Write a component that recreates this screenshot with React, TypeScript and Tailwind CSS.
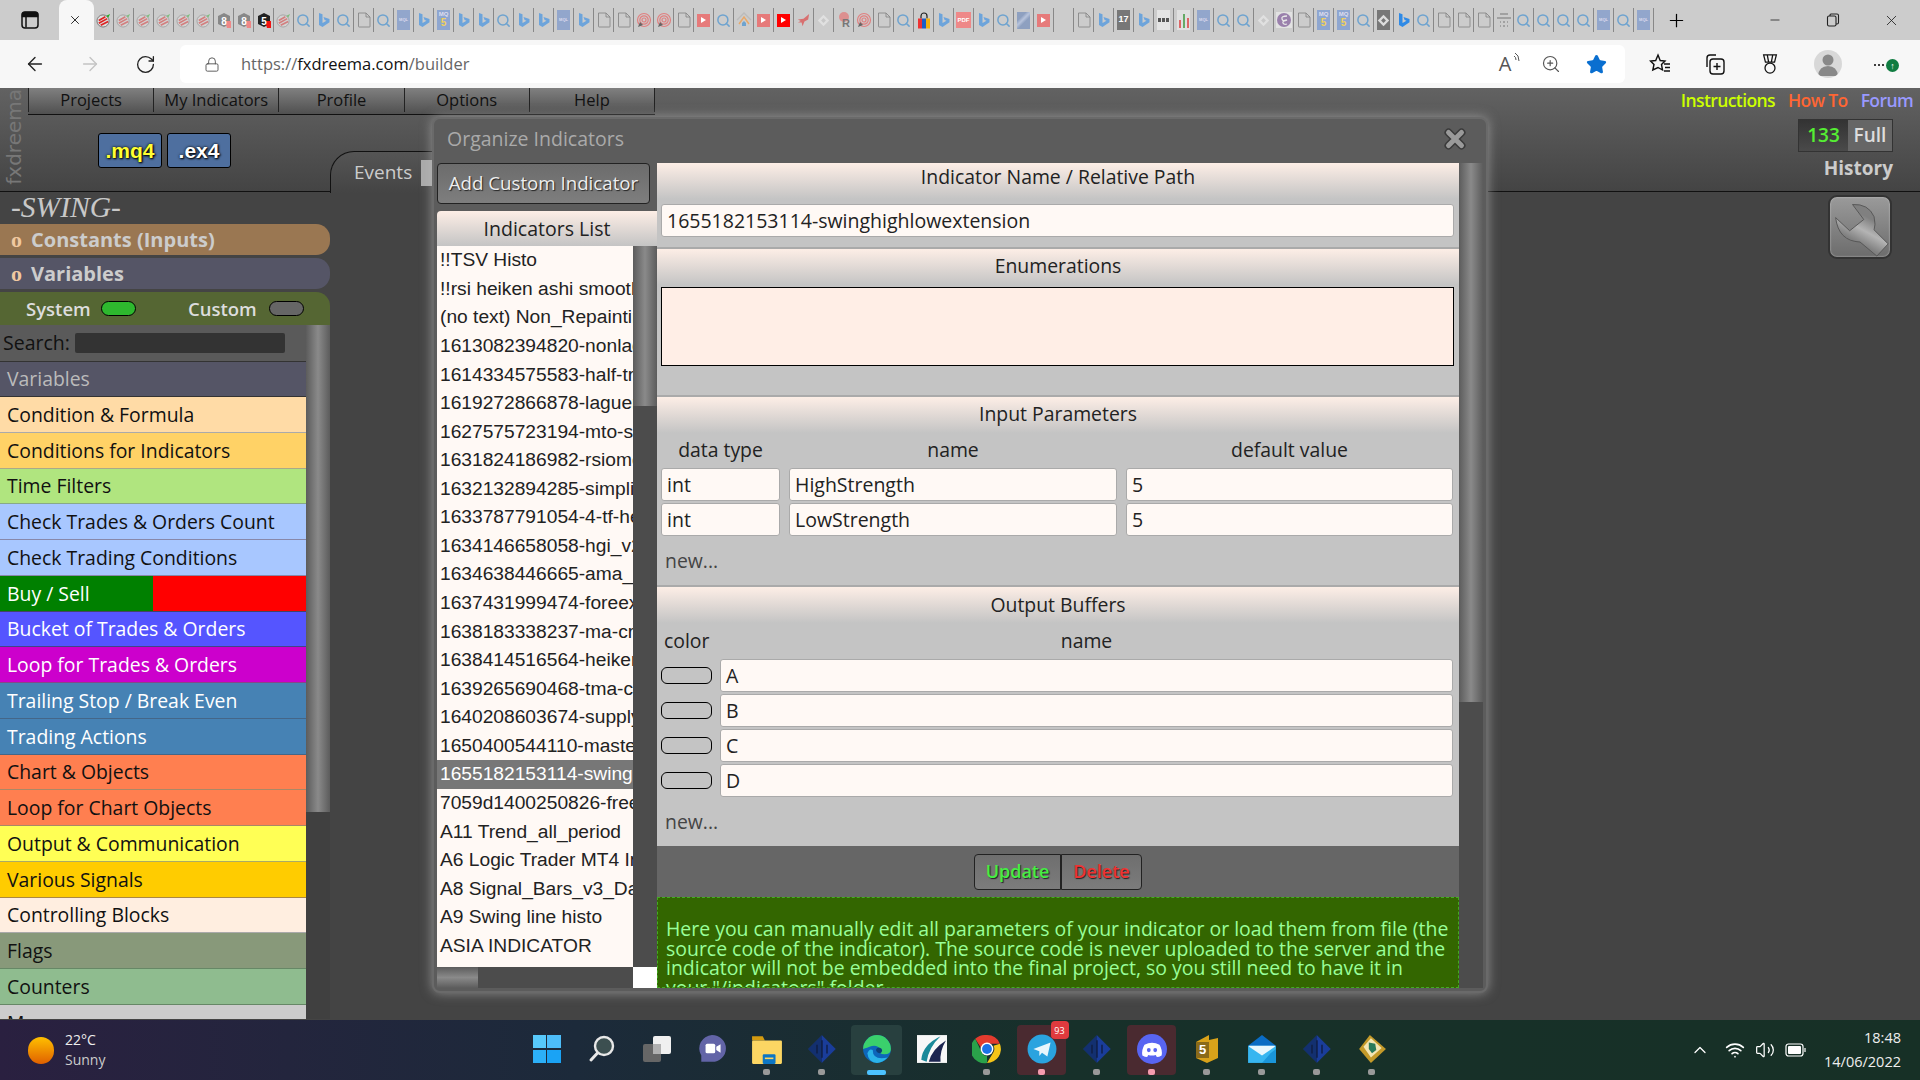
import type { ReactNode } from "react";
import { ArrowLeft, ArrowRight, ChevronUp, Lock, Minus, Plus, RotateCw, Search, Star, Volume2, Wifi, X, ZoomIn } from "lucide-react";

const tabIcons = [
  "fx", "fxp", "fxp", "fxp", "fxp", "fxp", "hex8", "hex8", "hex5", "fxp", "search", "bing", "search", "doc", "search", "mql", "bing", "mq5", "bing",
  "bing", "search", "bing", "bing", "mql", "bing", "doc", "doc", "finger", "finger", "doc", "play", "search", "house", "play", "yt", "bird", "gem", "r", "finger", "doc", "search", "bag", "bing",
  "pdf", "bing", "search", "img", "play", "", "doc", "bing", "tv", "bing", "dots", "chart", "mql", "search", "search", "gem", "emacs", "doc", "mq5", "mq5", "search", "gemd", "bings", "search",
  "doc", "doc", "doc", "lines", "search", "search", "search", "search", "mql", "search", "mql",
];

function TabIcon({ kind }: { kind: string }) {
  switch (kind) {
    case "fx":
    case "fxp":
      return (
        <svg viewBox="0 0 16 16" className={`h-[15px] w-[15px] ${kind === "fxp" ? "opacity-45" : ""}`}>
          <circle cx="7.5" cy="8.5" r="6.5" fill="#ddd" stroke="#777" />
          <path d="M3 11 12 6M3 8 10 4M5 13 13 9" stroke="#d22" strokeWidth="1.8" />
          <path d="M11 3 15 1 13 5z" fill="#2a2" />
        </svg>
      );
    case "hex8":
    case "hex5":
      return (
        <svg viewBox="0 0 16 16" className="h-[16px] w-[16px]">
          <path d="M8 1 14 4V12L8 15 2 12V4z" fill={kind === "hex5" ? "#222" : "#888"} />
          <path d="M9 9H15V16H11z" fill={kind === "hex5" ? "#e11" : "#e88"} />
          <text x="8" y="12.5" textAnchor="middle" fontSize="10" fontWeight="700" fill="#fff" fontFamily="Liberation Sans">{kind === "hex5" ? "5" : "8"}</text>
        </svg>
      );
    case "search":
      return <Search className="h-[15px] w-[15px] text-[#6ea3cf]" strokeWidth={2.4} />;
    case "bing":
    case "bings":
      return (
        <svg viewBox="0 0 16 16" className={`h-[16px] w-[16px] ${kind === "bing" ? "opacity-60" : ""}`}>
          <path d="M3 1 6.5 2.2V11L10.5 8.8 8.6 7.9 7.5 5 13.5 7V10.2L6.5 15 3 13z" fill="#2f8ae6" />
        </svg>
      );
    case "doc":
      return (
        <svg viewBox="0 0 16 16" className="h-[16px] w-[16px]" fill="none" stroke="#888" strokeWidth="0.9">
          <path d="M2.5 1H10L14 5V14.5Q14 15 13.5 15H3Q2.5 15 2.5 14.5zM10 1V5H14" />
        </svg>
      );
    case "mql":
      return (
        <div className="flex h-[20px] w-[13px] items-center justify-center bg-[#92a6cc] font-['Liberation_Sans'] text-[4px] font-bold text-[#dde]">MQL</div>
      );
    case "mq5":
      return (
        <div className="flex h-[20px] w-[13px] flex-col items-center bg-[#8ea6d0] font-['Liberation_Sans'] text-[6px] font-bold leading-[8px] text-[#dde]">
          MQ<span className="text-[10px] leading-[10px] text-[#f0d060]">5</span>
        </div>
      );
    case "finger":
      return (
        <svg viewBox="0 0 16 16" className="h-[16px] w-[16px]" fill="none" stroke="#e08080" strokeWidth="1.2">
          <circle cx="8" cy="8" r="6.5" />
          <circle cx="8" cy="8" r="4.2" />
          <circle cx="8" cy="8" r="2" />
          <path d="M2 15 4 10 7 13z" fill="#666" stroke="none" />
        </svg>
      );
    case "play":
    case "yt":
      return (
        <div className={`flex h-[13px] w-[13px] items-center justify-center ${kind === "yt" ? "bg-[#f00]" : "bg-[#e67a7a]"}`}>
          <div className="h-0 w-0 border-y-[3px] border-l-[5px] border-y-transparent border-l-white" />
        </div>
      );
    case "house":
      return (
        <svg viewBox="0 0 16 16" className="h-[16px] w-[16px]" fill="none" strokeWidth="1.4">
          <path d="M1 8 8 1 15 8" stroke="#bbb" />
          <path d="M3 12 8 5 13 12" stroke="#e8a868" />
          <path d="M6 14V11L8 9 10 11V14z" fill="#6ea3cf" />
        </svg>
      );
    case "bird":
      return (
        <svg viewBox="0 0 16 16" className="h-[15px] w-[15px]">
          <path d="M2 7 8 6 14 1 13 7 9 9 7 14 6 10 2 10 5 8.5z" fill="#d87070" />
        </svg>
      );
    case "gem":
    case "gemd":
      return (
        <div className={`flex h-[20px] w-[13px] items-center justify-center ${kind === "gemd" ? "bg-[#777]" : ""}`}>
          <svg viewBox="0 0 16 16" className="h-[13px] w-[13px]">
            <path d="M8 1 15 8 8 15 1 8z" fill={kind === "gemd" ? "#ddd" : "#e0e0e0"} />
            <path d="M5 8 8 5 11 8 8 11z" fill={kind === "gemd" ? "#777" : "#c8c8c8"} />
          </svg>
        </div>
      );
    case "r":
      return (
        <svg viewBox="0 0 16 16" className="h-[16px] w-[16px]">
          <circle cx="8" cy="5" r="5" fill="#dc9090" />
          <text x="10" y="15" textAnchor="middle" fontSize="11" fontWeight="700" fill="#777" fontFamily="Liberation Sans">R</text>
        </svg>
      );
    case "bag":
      return (
        <svg viewBox="0 0 16 16" className="h-[19px] w-[16px]">
          <path d="M5 6V3.5A3 3 0 0 1 11 3.5V6" fill="none" stroke="#222" strokeWidth="1.2" />
          <rect x="2" y="6" width="4" height="10" fill="#e33" />
          <rect x="6" y="6" width="4" height="10" fill="#1a5fc8" />
          <rect x="10" y="6" width="4" height="10" fill="#f2b010" />
        </svg>
      );
    case "pdf":
      return (
        <div className="flex h-[16px] w-[15px] items-center justify-center bg-[#e88] font-['Liberation_Sans'] text-[6px] font-bold text-white">PDF</div>
      );
    case "img":
      return <div className="h-[17px] w-[13px] bg-[linear-gradient(135deg,#8ea0c0_30%,#b8c4dc_45%,#8ea0c0_60%)]" />;
    case "tv":
      return <div className="flex h-[20px] w-[13px] items-center justify-center bg-[#777] font-['Liberation_Sans'] text-[9px] font-bold text-white">17</div>;
    case "dots":
      return (
        <div className="flex h-[20px] w-[13px] items-center justify-center gap-px bg-[#e4e4e4]">
          <div className="h-[4px] w-[3px] bg-[#555]" />
          <div className="h-[4px] w-[3px] bg-[#555]" />
          <div className="h-[4px] w-[3px] bg-[#555]" />
        </div>
      );
    case "chart":
      return (
        <div className="flex h-[20px] w-[13px] items-end justify-center gap-[2px] bg-[#e0e0e0] pb-[2px]">
          <div className="h-[8px] w-[2px] bg-[#d66]" />
          <div className="h-[14px] w-[2px] bg-[#6a6]" />
          <div className="h-[10px] w-[2px] bg-[#d66]" />
        </div>
      );
    case "emacs":
      return (
        <svg viewBox="0 0 16 16" className="h-[18px] w-[16px]">
          <rect width="16" height="16" fill="#e2e2e2" />
          <circle cx="8" cy="8" r="7" fill="#9a80ac" />
          <path d="M11 4Q5 4 6 7T11 8Q6 9 7 11T11 12" fill="none" stroke="#e8e8e8" strokeWidth="1.3" />
        </svg>
      );
    case "lines":
      return (
        <svg viewBox="0 0 16 16" className="h-[16px] w-[16px]" stroke="#777" strokeWidth="1">
          <path d="M4 2H12M1 6H15M4 10H5M7 10H9M11 10H12M4 14H5M7 14H9M11 14H12" />
        </svg>
      );
    default:
      return null;
  }
}

function TabStrip() {
  return (
    <div className="flex h-[40px] shrink-0 items-stretch bg-[#cccccc]">
      <div className="flex w-[59px] items-center justify-center">
        <svg viewBox="0 0 18 18" className="h-[18px] w-[18px]" fill="none" stroke="#111" strokeWidth="1.5">
          <rect x="1" y="1" width="16" height="16" rx="3" />
          <path d="M1.5 3.5Q1.5 1.5 4 1.5H14Q16.5 1.5 16.5 3.5V5.5H1.5z" fill="#111" />
          <path d="M5 5.5V16.5" />
        </svg>
      </div>
      <div className="flex w-[35px] items-center justify-center rounded-t-[8px] bg-[#f7f7f7] pr-[4px]">
        <X className="h-[14px] w-[14px] text-black" strokeWidth={1.4} />
      </div>
      {tabIcons.map((kind, i) => (
        <div key={i} className="flex h-[40px] w-[20px] items-center">
          <div className="flex h-[24px] w-[19px] items-center justify-center overflow-hidden"><TabIcon kind={kind} /></div>
          <div className="h-[24px] w-px bg-[#888]" />
        </div>
      ))}
      <div className="flex w-[44px] items-center justify-center">
        <Plus className="h-[21px] w-[21px] text-black" strokeWidth={1.4} />
      </div>
      <div className="ml-auto flex items-center">
        <div className="flex w-[58px] justify-center"><Minus className="h-[14px] w-[14px] text-[#222]" strokeWidth={1.4} /></div>
        <div className="flex w-[58px] justify-center">
          <svg viewBox="0 0 14 14" className="h-[14px] w-[14px]" fill="none" stroke="#222" strokeWidth="1.1">
            <rect x="1.5" y="3" width="8.5" height="10" rx="1.5" />
            <path d="M4 3V2Q4 1 5 1H11Q12.5 1 12.5 2.5V9.5Q12.5 11 11 11H10" />
          </svg>
        </div>
        <div className="flex w-[58px] justify-center"><X className="h-[17px] w-[17px] text-[#222]" strokeWidth={1.2} /></div>
      </div>
    </div>
  );
}

function AddressBar() {
  return (
    <div className="flex h-[48px] shrink-0 items-center bg-[#f7f7f7]">
      <div className="flex w-[180px] items-center">
        <div className="flex w-[70px] justify-center"><ArrowLeft className="h-[22px] w-[22px] text-[#222]" strokeWidth={1.5} /></div>
        <div className="flex w-[40px] justify-center"><ArrowRight className="h-[22px] w-[22px] text-[#c4c4c4]" strokeWidth={1.5} /></div>
        <div className="flex w-[70px] justify-center"><RotateCw className="h-[21px] w-[21px] text-[#222]" strokeWidth={1.5} /></div>
      </div>
      <div className="flex h-[38px] w-[1445px] items-center rounded-[6px] bg-white">
        <Lock className="ml-[24px] h-[17px] w-[16px] text-[#555]" strokeWidth={1.4} />
        <div className="ml-[21px] font-['Open_Sans',sans-serif] text-[16.5px] text-[#666]">
          https://<span className="text-[#111]">fxdreema.com</span>/builder
        </div>
        <div className="ml-auto flex items-center">
          <div className="relative flex w-[46px] justify-center font-['Open_Sans',sans-serif] text-[20px] leading-none text-[#555]">
            A
            <svg viewBox="0 0 8 10" className="absolute right-[7px] top-[-2px] h-[10px] w-[8px]" fill="none" stroke="#555"><path d="M1 4Q3 5 3 8M2 1Q6 3 6 9" /></svg>
          </div>
          <div className="flex w-[46px] justify-center"><ZoomIn className="h-[20px] w-[20px] text-[#555]" strokeWidth={1.4} /></div>
          <div className="mr-[7px] flex w-[44px] justify-center"><Star className="h-[21px] w-[21px] fill-[#0a6fd0] text-[#0a6fd0]" /></div>
        </div>
      </div>
      <div className="flex flex-1 items-center">
        <div className="ml-[15px] flex w-[40px] justify-center">
          <svg viewBox="0 0 22 22" className="h-[22px] w-[22px]" fill="none" stroke="#111" strokeWidth="1.4">
            <path d="M9 2 11.2 7.5 16 8 12.5 11.5 13.5 17 9 14.5 3.8 17 5 11.5 1.5 8 6.7 7.5zM15 11H21M16 14.5H21M15 18H21" />
          </svg>
        </div>
        <div className="ml-[15px] flex w-[40px] justify-center">
          <svg viewBox="0 0 22 22" className="h-[24px] w-[22px]" fill="none" stroke="#111" strokeWidth="1.4">
            <path d="M12 2H6Q3 2 3 5V14" />
            <rect x="6" y="6" width="14" height="15" rx="3" />
            <path d="M13 10V17M9.5 13.5H16.5" />
          </svg>
        </div>
        <div className="ml-[15px] flex w-[40px] justify-center">
          <svg viewBox="0 0 22 24" className="h-[24px] w-[20px]" fill="none" stroke="#111" strokeWidth="1.4">
            <path d="M4 2H18L16 10H6zM8 2 9.5 10M14 2 12.5 10" />
            <circle cx="11" cy="16.5" r="5.5" />
          </svg>
        </div>
        <div className="ml-[24px] flex h-[28px] w-[28px] items-center justify-center overflow-hidden rounded-full bg-[#d8d8d8]">
          <svg viewBox="0 0 28 28" className="h-[28px] w-[28px]">
            <circle cx="14" cy="10" r="5.5" fill="#888" />
            <path d="M4 26Q5 16 14 16T24 26z" fill="#888" />
          </svg>
        </div>
        <div className="relative ml-[32px] flex w-[24px] gap-[2px] pt-[2px]">
          <div className="h-[2px] w-[2px] rounded-full bg-black" />
          <div className="h-[2px] w-[2px] rounded-full bg-black" />
          <div className="h-[2px] w-[2px] rounded-full bg-black" />
          <div className="absolute left-[12px] top-[-3px] flex h-[13px] w-[13px] items-center justify-center rounded-full bg-[#107c41] font-['Open_Sans',sans-serif] text-[9px] font-bold leading-none text-white">↑</div>
        </div>
      </div>
    </div>
  );
}

function BuilderHeader() {
  const menu = ["Projects", "My Indicators", "Profile", "Options", "Help"];
  return (
    <header className="relative flex h-[104px] shrink-0 justify-between border-b border-[#111] bg-[linear-gradient(#626262,#444444)]">
      <div className="flex">
        <div className="flex w-[28px] items-end justify-center overflow-hidden pb-[6px]">
          <span className="rotate-180 font-['DejaVu_Sans',sans-serif] text-[20px] leading-none text-[#777] [writing-mode:vertical-rl]">fxdreema</span>
        </div>
        <div>
          <nav className="flex h-[27px] w-[627px] border-b border-[#111] bg-[linear-gradient(#808080,#505050)] pb-[2px]">
            {menu.map((item) => (
              <div key={item} className="flex flex-1 items-center justify-center border-r border-[#222] font-['Open_Sans',sans-serif] text-[16.5px] text-[#111] first:border-l">
                {item}
              </div>
            ))}
          </nav>
          <div className="flex h-[77px]">
            <div className="flex w-[302px] gap-[5px] pl-[70px] pt-[18px]">
              <div className="flex h-[35px] w-[64px] items-center justify-center rounded-[3px] border border-black bg-[#4e6f9f] font-['Liberation_Sans',sans-serif] text-[21px] font-bold text-[#ffff33] [text-shadow:0_0_3px_#000,1px_1px_2px_#000]">.mq4</div>
              <div className="flex h-[35px] w-[64px] items-center justify-center rounded-[3px] border border-black bg-[#4e6f9f] font-['Liberation_Sans',sans-serif] text-[21px] font-bold text-white [text-shadow:0_0_3px_#000,1px_1px_2px_#000]">.ex4</div>
            </div>
            <div className="mt-[36px] flex h-[42px] w-[130px] items-center rounded-tl-[24px] border-l border-t border-[#111] bg-[linear-gradient(#555555,#444444)] pl-[23px]">
              <span className="font-['Open_Sans',sans-serif] text-[19px] text-[#ccc]">Events</span>
              <div className="ml-[9px] h-[26px] w-[12px] bg-[#aaa]" />
            </div>
          </div>
        </div>
      </div>
      <div className="flex flex-col items-end pr-[7px] font-['Open_Sans',sans-serif]">
        <div className="flex h-[25px] items-center gap-[13px] text-[17.5px] font-semibold tracking-[-0.6px]">
          <span className="text-[#ccff00]">Instructions</span>
          <span className="text-[#ff6633]">How To</span>
          <span className="text-[#9999ff]">Forum</span>
        </div>
        <div className="mr-[20px] mt-[6px] flex h-[33px] w-[95px] border border-[#333] text-[19px] font-semibold">
          <div className="flex w-[49px] items-center justify-center bg-[linear-gradient(#333333,#4a4a4a)] text-[#55ee33]">133</div>
          <div className="flex flex-1 items-center justify-center bg-[#666] text-[#ddd]">Full</div>
        </div>
        <div className="mr-[20px] mt-[2px] text-[19px] font-bold leading-[28px] text-[#ccc]">History</div>
      </div>
    </header>
  );
}

const blocks = [
  { name: "Condition & Formula", cls: "bg-[#ffdba6] border-[#aaa] text-[#111]" },
  { name: "Conditions for Indicators", cls: "bg-[#ffd266] border-[#aa8] text-[#111]" },
  { name: "Time Filters", cls: "bg-[#b0e57f] border-[#8a8] text-[#111]" },
  { name: "Check Trades & Orders Count", cls: "bg-[#a8c7ff] border-[#88a] text-[#111]" },
  { name: "Check Trading Conditions", cls: "bg-[#a8c7ff] border-[#88a] text-[#111]" },
  { name: "Buy / Sell", cls: "bg-[linear-gradient(90deg,#008000_50%,#ff0000_50%)] border-[#446] text-white" },
  { name: "Bucket of Trades & Orders", cls: "bg-[#5555ff] border-[#448] text-white" },
  { name: "Loop for Trades & Orders", cls: "bg-[#cc00cc] border-[#848] text-white" },
  { name: "Trailing Stop / Break Even", cls: "bg-[#4682b4] border-[#468] text-white" },
  { name: "Trading Actions", cls: "bg-[#4682b4] border-[#468] text-white" },
  { name: "Chart & Objects", cls: "bg-[#ff7f50] border-[#a86] text-[#111]" },
  { name: "Loop for Chart Objects", cls: "bg-[#ff7f50] border-[#a86] text-[#111]" },
  { name: "Output & Communication", cls: "bg-[#ffff55] border-[#aa6] text-[#111]" },
  { name: "Various Signals", cls: "bg-[#ffcc00] border-[#a84] text-[#111]" },
  { name: "Controlling Blocks", cls: "bg-[#ffeee0] border-[#aaa] text-[#111]" },
  { name: "Flags", cls: "bg-[#88997a] border-[#686] text-[#111]" },
  { name: "Counters", cls: "bg-[#8fbc8f] border-[#686] text-[#111]" },
  { name: "Messages", cls: "bg-[#cccccc] border-[#888] text-[#111]" },
];

function Toggle({ on }: { on?: boolean }) {
  return <div className={`h-[15px] w-[35px] rounded-full border border-black ${on ? "bg-[#2eb82e]" : "bg-[#666]"}`} />;
}

function Sidebar() {
  return (
    <aside className="flex w-[330px] shrink-0 flex-col font-['Open_Sans',sans-serif]">
      <div className="flex h-[32px] items-center pl-[11px] font-['Liberation_Serif',serif] text-[29.5px] italic leading-none text-[#c8c8c8]">-SWING-</div>
      <div className="flex h-[31px] items-center rounded-r-[14px] bg-[#9a7752] pl-[11px] pt-[1px] text-[20px] font-bold text-[#ccc]">
        <span className="mr-[9px] font-['Liberation_Serif',serif] text-[22px] leading-none text-[#f0c8a0]">o</span>Constants (Inputs)
      </div>
      <div className="mt-[3px] flex h-[31px] items-center rounded-r-[14px] bg-[#555566] pl-[11px] pt-[1px] text-[20px] font-bold text-[#ccc]">
        <span className="mr-[9px] font-['Liberation_Serif',serif] text-[22px] leading-none text-[#f0c8a0]">o</span>Variables
      </div>
      <div className="mt-[3px] flex h-[33px] items-center rounded-tr-[14px] bg-[#556633] pl-[26px] text-[18.5px] font-semibold text-[#ddd]">
        <span className="w-[75px]">System</span>
        <Toggle on />
        <span className="ml-[52px] w-[81px]">Custom</span>
        <Toggle />
      </div>
      <div className="flex h-[694px]">
        <div className="w-[306px] overflow-hidden">
          <div className="flex h-[37px] items-center gap-[5px] border-b border-[#333] bg-[#5a5a5a] pl-[3px] text-[19.5px] text-[#111]">
            Search:
            <div className="h-[20px] w-[210px] rounded-[2px] bg-[#333]" />
          </div>
          <div className="flex h-[35px] items-center border-b border-[#333] bg-[#555566] pl-[7px] text-[19.4px] text-[#bbb]">Variables</div>
          {blocks.map((b) => (
            <div key={b.name} className={`flex h-[35.75px] items-center border-b pl-[7px] text-[19.4px] ${b.cls}`}>{b.name}</div>
          ))}
        </div>
        <div className="flex w-[24px] flex-col bg-[#404040]">
          <div className="h-[487px] bg-[linear-gradient(90deg,#5c5c5c,#8a8a8a_50%,#5c5c5c)]" />
        </div>
      </div>
    </aside>
  );
}

const indicators = [
  "!!TSV Histo", "!!rsi heiken ashi smoothed", "(no text) Non_Repainting", "1613082394820-nonlag", "1614334575583-half-trend", "1619272866878-laguerre",
  "1627575723194-mto-signal", "1631824186982-rsiomega", "1632132894285-simplified", "1633787791054-4-tf-hedge", "1634146658058-hgi_v2", "1634638446665-ama_stl",
  "1637431999474-foreextrend", "1638183338237-ma-cross", "1638414516564-heiken", "1639265690468-tma-centered", "1640208603674-supplydemand", "1650400544110-master",
  "1655182153114-swinghighlow", "7059d1400250826-freedom", "A11 Trend_all_period", "A6 Logic Trader MT4 Indi", "A8 Signal_Bars_v3_Daily", "A9 Swing line histo", "ASIA INDICATOR", "Average Max Day",
];

function IndicatorList() {
  return (
    <div className="flex w-[220px] shrink-0 flex-col">
      <div className="flex h-[41px] w-[213px] items-center justify-center rounded-[4px] border border-[#222] bg-[linear-gradient(#6c6c6c,#7e7e7e)] text-[18.7px] text-[#eee] [text-shadow:1px_1px_1px_#222]">
        Add Custom Indicator
      </div>
      <div className="mt-[7px] flex h-[35px] items-center justify-center rounded-tl-[4px] bg-[linear-gradient(#fdeee6,#c4c4c4)] text-[19.5px] text-[#222]">Indicators List</div>
      <div className="flex h-[721px]">
        <div className="w-[196px] overflow-hidden bg-[#fff9f5] font-['Liberation_Sans',sans-serif] text-[19.2px] leading-[24px] text-[#222]">
          {indicators.map((name) => (
            <div key={name} className={`flex h-[28.57px] items-center whitespace-nowrap pl-[3px] ${name.startsWith("1655") ? "bg-[#777] text-white" : ""}`}>{name}</div>
          ))}
        </div>
        <div className="w-[24px] bg-[#4c4c4c]">
          <div className="h-[160px] bg-[linear-gradient(90deg,#5c5c5c,#8a8a8a_50%,#5c5c5c)]" />
        </div>
      </div>
      <div className="flex h-[21px]">
        <div className="w-[196px] bg-[#4c4c4c]">
          <div className="h-[21px] w-[41px] bg-[linear-gradient(#5c5c5c,#8a8a8a_50%,#5c5c5c)]" />
        </div>
        <div className="w-[24px] bg-white" />
      </div>
    </div>
  );
}

function Section({ title, className, titleClass, children }: { title: string; className: string; titleClass: string; children: ReactNode }) {
  return (
    <section className={`border-t-2 border-[#aaa] first:border-t-0 ${className}`}>
      <div className={`flex h-[36px] items-start justify-center bg-[linear-gradient(#fdeee6,#c4c4c4)] text-[19.4px] leading-[26px] text-[#222] ${titleClass}`}>{title}</div>
      {children}
    </section>
  );
}

function Field({ value }: { value: string }) {
  return <div className="flex h-[33px] items-center rounded-[3px] border border-[#aaa] bg-[#fff9f5] pl-[5px] text-[19.5px] text-[#222]">{value}</div>;
}

function EditorPanel() {
  return (
    <div className="flex w-[802px] shrink-0 flex-col bg-[#c4c4c4]">
      <Section title="Indicator Name / Relative Path" className="h-[84px]" titleClass="pt-[1px]">
        <div className="ml-[4px] mr-[5px] mt-[5px]"><Field value="1655182153114-swinghighlowextension" /></div>
      </Section>
      <Section title="Enumerations" className="h-[148px]" titleClass="pt-[4px]">
        <div className="ml-[4px] mr-[5px] mt-[2px] h-[79px] border border-black bg-[#ffeee6]" />
      </Section>
      <Section title="Input Parameters" className="h-[190px]" titleClass="pt-[4px]">
        <div className="grid grid-cols-[119px_328px_327px] gap-x-[9px] pl-[4px]">
          <div className="flex h-[35px] items-center justify-center pb-[1px] text-[19.4px] text-[#222]">data type</div>
          <div className="flex h-[35px] items-center justify-center pb-[1px] text-[19.4px] text-[#222]">name</div>
          <div className="flex h-[35px] items-center justify-center pb-[1px] text-[19.4px] text-[#222]">default value</div>
          <Field value="int" /><Field value="HighStrength" /><Field value="5" />
          <div className="col-span-3 h-[2px]" />
          <Field value="int" /><Field value="LowStrength" /><Field value="5" />
        </div>
        <div className="mt-[14px] pl-[8px] text-[19.4px] leading-[22px] text-[#444]">new...</div>
      </Section>
      <Section title="Output Buffers" className="h-[261px]" titleClass="pt-[5px]">
        <div className="flex h-[36px] items-center pl-[4px] text-[19.4px] text-[#222]">
          <span className="w-[59px] pl-[3px]">color</span>
          <span className="w-[733px] text-center">name</span>
        </div>
        <div className="flex flex-col gap-[2px] pl-[4px] pr-[6px]">
          {["A", "B", "C", "D"].map((n) => (
            <div key={n} className="flex items-center gap-[8px]">
              <div className="h-[17px] w-[51px] shrink-0 rounded-[6px] border border-black bg-[#c4c4c4]" />
              <div className="flex-1"><Field value={n} /></div>
            </div>
          ))}
        </div>
        <div className="mt-[14px] pl-[8px] text-[19.4px] leading-[22px] text-[#444]">new...</div>
      </Section>
      <div className="flex h-[51px] shrink-0 items-center justify-center bg-[#666]">
        <div className="flex h-[36px] w-[87px] items-center justify-center rounded-l-[4px] border border-[#222] bg-[linear-gradient(#6e6e6e,#7c7c7c)] text-[18px] font-semibold text-[#44ee44] [text-shadow:1px_1px_1px_#222]">Update</div>
        <div className="flex h-[36px] w-[81px] items-center justify-center rounded-r-[4px] border border-[#222] bg-[linear-gradient(#6e6e6e,#7c7c7c)] text-[18px] font-semibold text-[#ee3333] [text-shadow:1px_1px_1px_#222]">Delete</div>
      </div>
      <div className="h-[91px] shrink-0 overflow-hidden border border-dashed border-[#44aa22] bg-[#336600] px-[8px] pt-[21px] text-[19.45px] leading-[19.6px] text-[#99ff99]">
        Here you can manually edit all parameters of your indicator or load them from file (the source code of the indicator). The source code is never uploaded to the server and the indicator will not be embedded into the final project, so you still need to have it in
        <br />
        your "/indicators" folder.
      </div>
    </div>
  );
}

function Dialog() {
  return (
    <div className="absolute left-[432px] top-[29px] h-[876px] w-[1056px] rounded-[8px] border-2 border-[#6a6a6a] bg-[#5c5c5c] pl-[3px] font-['Open_Sans',sans-serif] shadow-[0_0_12px_rgba(190,190,190,0.6)]">
      <div className="flex h-[44px] items-center justify-between pb-[4px] pl-[10px] pr-[19px]">
        <span className="text-[19.5px] text-[#aaa]">Organize Indicators</span>
        <svg viewBox="0 0 24 24" className="h-[24px] w-[24px]" fill="none" strokeLinecap="round">
          <path d="M5.5 5.5 18.5 18.5M18.5 5.5 5.5 18.5" stroke="#3a3a3a" strokeWidth="8" />
          <path d="M5.5 5.5 18.5 18.5M18.5 5.5 5.5 18.5" stroke="#9a9a9a" strokeWidth="5" />
        </svg>
      </div>
      <div className="flex">
        <IndicatorList />
        <EditorPanel />
        <div className="w-[24px] rounded-tr-[3px] bg-[#4c4c4c]">
          <div className="h-[539px] bg-[linear-gradient(90deg,#5c5c5c,#8a8a8a_50%,#5c5c5c)]" />
        </div>
      </div>
    </div>
  );
}

function Builder() {
  return (
    <main className="relative flex flex-1 flex-col overflow-hidden bg-[#444444]">
      <BuilderHeader />
      <div className="flex flex-1 justify-between">
        <Sidebar />
        <div className="mr-[28px] mt-[3px] h-[64px] w-[64px] overflow-hidden rounded-[9px] border-2 border-[#333] bg-[linear-gradient(#9a9a9a,#6c6c6c)] shadow-[inset_0_0_2px_#ccc]">
          <svg viewBox="0 0 64 64" className="h-[60px] w-[60px]">
            <defs>
              <linearGradient id="wrench" x1="0.7" y1="0.3" x2="0.45" y2="0.75">
                <stop offset="0" stopColor="#808080" />
                <stop offset="0.5" stopColor="#b4b4b4" />
                <stop offset="1" stopColor="#808080" />
              </linearGradient>
            </defs>
            <path d="M6 22 21 36 36 24 24 8Q41 7 47 21 49 30 47 35L62 50 50 63 32 48Q9 47 6 22z" fill="url(#wrench)" stroke="#555" strokeWidth="1" />
          </svg>
        </div>
      </div>
      <Dialog />
    </main>
  );
}

function TaskIcon({ kind }: { kind: string }) {
  const diamond = (
    <svg viewBox="0 0 24 24" className="h-[30px] w-[30px]">
      <path d="M12 1 23 12 12 23 1 12z" fill="#1a3d9a" />
      <path d="M12 1 12 23 1 12z" fill="#133070" />
      <path d="M12 5 V19 M8 8.5V15.5 M16 8.5V15.5" stroke="#0f1a3a" strokeWidth="1" />
    </svg>
  );
  switch (kind) {
    case "start":
      return (
        <div className="grid h-[28px] w-[28px] grid-cols-2 gap-[1.5px]">
          <div className="bg-[#57c9fb]" /><div className="bg-[#4dbdf9]" /><div className="bg-[#2cb0f8]" /><div className="bg-[#1aa3f5]" />
        </div>
      );
    case "search":
      return (
        <svg viewBox="0 0 28 28" className="h-[28px] w-[28px]" fill="none">
          <circle cx="16" cy="11" r="9" fill="#3c4f50" stroke="#e8e8e8" strokeWidth="2.4" />
          <path d="M9.5 18 3 25" stroke="#e8e8e8" strokeWidth="3" strokeLinecap="round" />
        </svg>
      );
    case "view":
      return (
        <svg viewBox="0 0 30 30" className="h-[30px] w-[30px]">
          <rect x="11" y="2" width="18" height="18" rx="2" fill="#f0f0f0" />
          <rect x="1" y="10" width="18" height="18" rx="2" fill="#666" />
          <rect x="11" y="10" width="8" height="10" fill="#b0b0b0" />
        </svg>
      );
    case "meet":
      return (
        <svg viewBox="0 0 28 28" className="h-[30px] w-[30px]">
          <path d="M14 1A13 12.5 0 0 1 14 26H4V20A13 12.5 0 0 1 14 1z" fill="#6264a7" />
          <rect x="8" y="9" width="9" height="9" rx="1.5" fill="#fff" />
          <path d="M18 12 22 9.5V17.5L18 15z" fill="#fff" />
        </svg>
      );
    case "folder":
      return (
        <svg viewBox="0 0 30 28" className="h-[30px] w-[32px]">
          <path d="M1 2H11L13 6H1z" fill="#d49b10" />
          <rect x="1" y="6" width="28" height="22" rx="1" fill="#fcd663" />
          <rect x="11" y="19" width="12" height="9" rx="1" fill="#0d76c4" />
          <rect x="13" y="22" width="8" height="1.5" fill="#fcd663" />
        </svg>
      );
    case "diamond":
      return diamond;
    case "edge":
      return (
        <svg viewBox="0 0 28 28" className="h-[30px] w-[30px]">
          <circle cx="14" cy="14" r="13" fill="#0d66ba" />
          <path d="M1 14A13 13 0 0 1 27 14Q27 19 21 19 15 19 17.5 15 14 9 7 12 2 14 1 14z" fill="#3ad06c" />
          <path d="M10 15Q10 25 24 22 19 27 14 27 6 27 5 18Q7 13 10 15z" fill="#2bb3e8" />
          <path d="M13 15Q14 11 18 13.5 20 16 17 18 14 18 13 15z" fill="#0c3f78" />
        </svg>
      );
    case "pen":
      return (
        <svg viewBox="0 0 28 28" className="h-[30px] w-[30px]">
          <rect x="0" y="1" width="28" height="26" fill="#f8f8f8" />
          <path d="M4 24Q5 10 22 2 11 12 9 26z" fill="#1a8a9a" />
          <path d="M11 26Q14 14 27 6 21 16 22 26z" fill="#1c2550" />
        </svg>
      );
    case "chrome":
      return (
        <svg viewBox="0 0 28 28" className="h-[30px] w-[30px]">
          <path d="M14 1A13 13 0 0 1 26 9H14A6 6 0 0 0 8.2 12.5L3 4.5A13 13 0 0 1 14 1z" fill="#e33b2e" />
          <path d="M26 9A13 13 0 0 1 14 27L20 17A6 6 0 0 0 20 11z" fill="#f5c518" />
          <path d="M3 4.5 8.8 16.5A6 6 0 0 0 14 20.5L14 27A13 13 0 0 1 3 4.5z" fill="#2aa24a" />
          <circle cx="14" cy="14" r="6" fill="#fff" />
          <circle cx="14" cy="14" r="4.6" fill="#1c73e8" />
        </svg>
      );
    case "telegram":
      return (
        <div className="relative">
          <svg viewBox="0 0 28 28" className="h-[30px] w-[30px]">
            <circle cx="14" cy="14" r="13.5" fill="#2aa3df" />
            <path d="M6 14 22 8 19 21 14 17.5 11.5 20.5V16z" fill="#e8f6fc" />
          </svg>
          <div className="absolute right-[-12px] top-[-13px] flex h-[18px] w-[18px] items-center justify-center rounded-[4px] bg-[#e03a3e] font-['Open_Sans',sans-serif] text-[9px] leading-none text-white">93</div>
        </div>
      );
    case "discord":
      return (
        <svg viewBox="0 0 28 28" className="h-[30px] w-[30px]">
          <circle cx="14" cy="14" r="14" fill="#5865f2" />
          <path d="M7 10Q14 6.5 21 10 24 15 23 20 20.5 21.5 18.5 21.5L17.5 19.5Q14 20.5 10.5 19.5L9.5 21.5Q7.5 21.5 5 20 4 15 7 10z" fill="#fff" />
          <ellipse cx="11" cy="15" rx="1.8" ry="2" fill="#5865f2" />
          <ellipse cx="17" cy="15" rx="1.8" ry="2" fill="#5865f2" />
        </svg>
      );
    case "sublime":
      return (
        <svg viewBox="0 0 28 30" className="h-[32px] w-[28px]">
          <path d="M3 8 16 1V6L25 4V24L14 29 3 24z" fill="#d9a21a" />
          <rect x="3" y="8" width="13" height="16" fill="#8a6a1a" />
          <text x="9.5" y="20" textAnchor="middle" fontSize="13" fontWeight="700" fill="#fff" fontFamily="Liberation Sans">5</text>
        </svg>
      );
    case "mail":
      return (
        <svg viewBox="0 0 28 28" className="h-[32px] w-[30px]">
          <path d="M14 1 27 11V12H1V11z" fill="#0a6cc4" />
          <rect x="1" y="11" width="26" height="16" fill="#37b6f0" />
          <path d="M2 11H26V12L14 20 2 12z" fill="#e8f7fd" />
          <path d="M27 14V27H14L22 18z" fill="#1a96da" />
        </svg>
      );
    case "book":
      return (
        <svg viewBox="0 0 28 28" className="h-[30px] w-[30px]">
          <path d="M2 14 12 1 27 14 13 27z" fill="#c49a2a" />
          <path d="M6 12 13 4 23 13 13 22z" fill="#f4e6b4" />
          <path d="M11 8 17 9 18 15 14 18 11 14z" fill="#2a7a5a" />
        </svg>
      );
    default:
      return null;
  }
}

const taskbarItems = [
  { kind: "start", state: "" }, { kind: "search", state: "" }, { kind: "view", state: "" }, { kind: "meet", state: "" },
  { kind: "folder", state: "run" }, { kind: "diamond", state: "run" }, { kind: "edge", state: "active" }, { kind: "pen", state: "" },
  { kind: "chrome", state: "run" }, { kind: "telegram", state: "alert" }, { kind: "diamond", state: "run" }, { kind: "discord", state: "alert" },
  { kind: "sublime", state: "run" }, { kind: "mail", state: "run" }, { kind: "diamond", state: "run" }, { kind: "book", state: "run" },
];

function Taskbar() {
  return (
    <footer className="flex h-[60px] shrink-0 items-center bg-[linear-gradient(90deg,#2a2040,#1c2a3a_30%,#17302a_55%,#173026)] font-['Open_Sans',sans-serif] text-white">
      <div className="flex w-[519px] items-center pl-[28px]">
        <div className="h-[27px] w-[26px] rounded-full bg-[linear-gradient(#ffc000,#e06000)]" />
        <div className="ml-[11px] text-[14px] leading-[20px] text-[#eee]">
          <div>22°C</div>
          <div className="text-[#ccc]">Sunny</div>
        </div>
      </div>
      {taskbarItems.map((item, i) => (
        <div key={i} className="relative flex h-[60px] w-[55px] items-center justify-center">
          {item.state === "active" && <div className="absolute inset-x-[2px] inset-y-[5px] rounded-[4px] bg-[#28403f]" />}
          {item.state === "alert" && <div className="absolute inset-x-[3px] inset-y-[5px] rounded-[4px] bg-[#4a2a30]" />}
          <div className="relative mt-[-2px]"><TaskIcon kind={item.kind} /></div>
          {item.state === "run" && <div className="absolute bottom-[5px] h-[6px] w-[7px] rounded-[2px] bg-[#999]" />}
          {item.state === "alert" && <div className="absolute bottom-[5px] h-[6px] w-[7px] rounded-[2px] bg-[#f49cae]" />}
          {item.state === "active" && <div className="absolute bottom-[5px] h-[5px] w-[19px] rounded-[2px] bg-[#4cc2ff]" />}
        </div>
      ))}
      <div className="ml-auto flex items-center">
        <ChevronUp className="h-[20px] w-[20px] text-white" strokeWidth={1.5} />
        <Wifi className="ml-[15px] h-[20px] w-[20px] text-white" strokeWidth={2} />
        <Volume2 className="ml-[10px] h-[20px] w-[20px] text-white" strokeWidth={1.5} />
        <svg viewBox="0 0 22 14" className="ml-[10px] h-[14px] w-[22px]" fill="none" stroke="#fff" strokeWidth="1.2">
          <rect x="1" y="1" width="17" height="12" rx="2.5" />
          <rect x="3" y="3" width="13" height="8" rx="1" fill="#fff" stroke="none" />
          <path d="M20 5V9" />
        </svg>
        <div className="ml-[17px] mr-[19px] text-right text-[14.5px] leading-[24px] text-[#eee]">
          <div>18:48</div>
          <div>14/06/2022</div>
        </div>
      </div>
    </footer>
  );
}

export default function App() {
  return (
    <div className="flex h-screen w-[1920px] flex-col overflow-hidden">
      <TabStrip />
      <AddressBar />
      <Builder />
      <Taskbar />
    </div>
  );
}
